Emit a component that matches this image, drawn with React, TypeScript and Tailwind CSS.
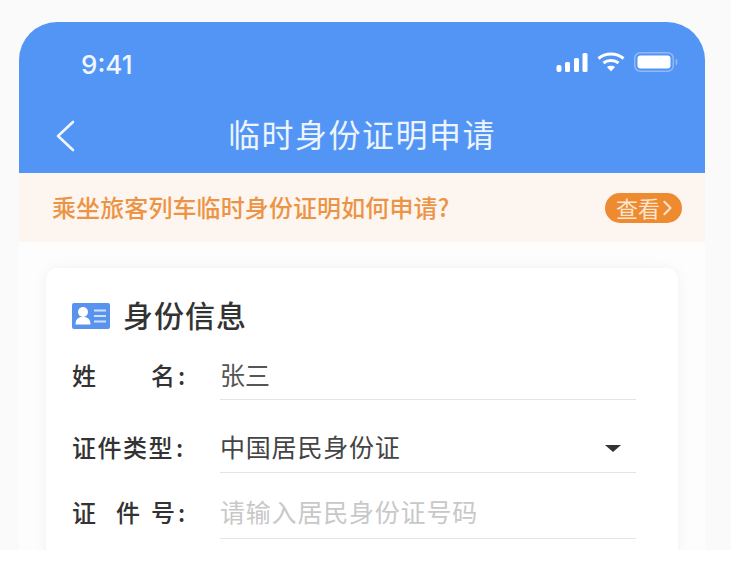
export default function App() {
  const labelCls = "w-[148px] shrink-0 flex items-center text-[24px] leading-none text-[#333333] font-medium whitespace-nowrap";
  const valueCls = "flex-1 h-full border-b border-[#e4e4e4] flex items-center";
  return (
    <div className="w-[731px] h-[584px] bg-white overflow-hidden font-['Noto_Sans_CJK_SC','Liberation_Sans',sans-serif]">
      <div className="h-[550px] bg-[#fafafa] pt-[22px] px-[19px] overflow-hidden">
        <div className="w-[686px] h-[528px] bg-[#fdfdfd] rounded-t-[38px] overflow-hidden flex flex-col">
          <div className="h-[151px] shrink-0 bg-[#5295f5] flex flex-col text-white">
            <div className="h-[85px] flex items-start justify-between pl-[62px] pr-[27px] pt-[28px]">
              <span className="font-['Inter','Liberation_Sans',sans-serif] text-[26px] leading-[30px] font-medium text-[#f0f6fe]">9:41</span>
              <div className="flex items-center gap-[9px] pt-[2px]">
                <svg width="32" height="20" viewBox="0 0 32 20" fill="white">
                  <rect x="0.5" y="13" width="5" height="7" rx="2" />
                  <rect x="9" y="10" width="5" height="10" rx="1.5" />
                  <rect x="18" y="6" width="5" height="14" rx="1.5" />
                  <rect x="26.5" y="1" width="5" height="19" rx="1.5" />
                </svg>
                <svg width="28" height="20" viewBox="0 0 28 20" fill="none" stroke="white" strokeWidth="3">
                  <path d="M1.5 6.5C8.5 0.5 19.5 0.5 26.5 6.5" />
                  <path d="M6.5 11C10.5 7.8 17.5 7.8 21.5 11" />
                  <path d="M14 19.5L10 15C12 13.3 16 13.3 18 15Z" fill="white" stroke="none" />
                </svg>
                <svg width="44" height="20" viewBox="0 0 44 20" fill="none">
                  <rect x="0.75" y="0.75" width="38.5" height="18.5" rx="5.5" stroke="#8fb9f8" strokeWidth="1.5" />
                  <rect x="3.5" y="3.5" width="33" height="13" rx="3" fill="white" />
                  <rect x="41.5" y="7" width="1.8" height="6" rx="0.9" fill="#8fb9f8" />
                </svg>
              </div>
            </div>
            <div className="relative flex items-start justify-center">
              <svg className="absolute left-[34px] top-[12px]" width="24" height="34" viewBox="0 0 24 34" fill="none" stroke="#f0f6fe" strokeWidth="2.6" strokeLinecap="round" strokeLinejoin="round">
                <path d="M20 3L5 17L20 31" />
              </svg>
              <span className="text-[32px] leading-[52px] font-normal tracking-[1.5px] text-[#edf4fe]">临时身份证明申请</span>
            </div>
          </div>
          <div className="h-[69px] shrink-0 bg-[#fdf5f0] flex items-center justify-between pl-[33px] pr-[23px]">
            <span className="text-[24px] leading-none font-medium tracking-[0.1px] pb-[1px] text-[#ec9445]">乘坐旅客列车临时身份证明如何申请?</span>
            <div className="w-[77px] h-[30px] rounded-full bg-[#ee8a30] flex items-center pl-[11px] gap-[2px]">
              <span className="text-[22px] leading-none pb-[2px] text-[#fbe5d2] whitespace-nowrap">查看</span>
              <svg width="10" height="16" viewBox="0 0 10 18" fill="none" stroke="#fbe5d2" strokeWidth="2.2" strokeLinecap="round" strokeLinejoin="round">
                <path d="M2 2L9 9L2 16" />
              </svg>
            </div>
          </div>
          <div className="flex-1 px-[27px] pt-[26px] overflow-hidden">
            <div className="h-[300px] w-[632px] bg-white rounded-[12px] shadow-[0_0_14px_rgba(0,0,0,0.05)] pl-[26px] pr-[42px] pt-[31px]">
              <div className="flex items-center gap-[13px] h-[34px]">
                <svg width="38" height="26" viewBox="0 0 38 26">
                  <rect width="38" height="26" rx="2" fill="#5a93ee" />
                  <circle cx="11" cy="9" r="5" fill="white" />
                  <path d="M3.5 21.5C3.5 15.5 7 14 11 14C15 14 18.5 15.5 18.5 21.5Z" fill="white" />
                  <path d="M22 7.5H34M22 13H34M22 18.5H34" stroke="#cfe0fa" strokeWidth="2" />
                </svg>
                <span className="text-[30px] leading-none font-medium tracking-[1px] pb-[4px] text-[#333333]">身份信息</span>
              </div>
              <div className="flex mt-[19px] h-[48px]">
                <div className={`${labelCls} pb-[3px]`}>
                  <span className="w-[79px]">姓</span><span>名</span><span className="ml-[3px]">:</span>
                </div>
                <div className={valueCls}>
                  <span className="text-[25px] leading-none pb-[3px] text-[#555555]">张三</span>
                </div>
              </div>
              <div className="flex mt-[25px] h-[48px]">
                <div className={`${labelCls} pb-[4px]`}>
                  <span className="tracking-[1.5px]">证件类型</span><span className="ml-[2px]">:</span>
                </div>
                <div className={`${valueCls} justify-between pr-[15px]`}>
                  <span className="text-[25px] leading-none pb-[4px] text-[#444444] tracking-[0.8px]">中国居民身份证</span>
                  <div className="w-0 h-0 border-x-[8px] border-x-transparent border-t-[7px] border-t-[#333333]"></div>
                </div>
              </div>
              <div className="flex mt-[18px] h-[48px]">
                <div className={`${labelCls} pb-[7px]`}>
                  <span className="w-[44px]">证</span><span className="w-[35px]">件</span><span>号</span><span className="ml-[3px]">:</span>
                </div>
                <div className={`${valueCls} pb-[7px]`}>
                  <span className="text-[25px] leading-none text-[#c8c8c8] tracking-[0.8px]">请输入居民身份证号码</span>
                </div>
              </div>
            </div>
          </div>
        </div>
      </div>
    </div>
  );
}
